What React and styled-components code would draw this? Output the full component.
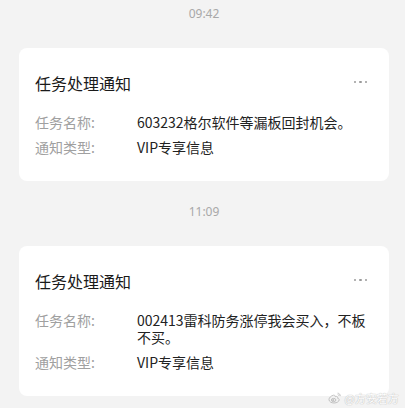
import React from "react";
import styled, { createGlobalStyle } from "styled-components";

const Global = createGlobalStyle`
  html, body { margin: 0; padding: 0; background: #f3f3f3; }
  body { font-family: "Noto Sans CJK SC", "Noto Sans", "Liberation Sans", sans-serif; }
`;

const Page = styled.div`
  position: relative;
  width: 405px;
  height: 408px;
  overflow: hidden;
  box-sizing: border-box;
  padding: 6px 16px 0 19px;
  display: flex;
  flex-direction: column;
  gap: 23px;
`;

const Group = styled.section`
  display: flex;
  flex-direction: column;
  gap: 26px;
`;

const Time = styled.div`
  text-align: center;
  font-size: 12px;
  line-height: 16px;
  color: #a8a8a8;
  font-family: "Noto Sans", "Liberation Sans", sans-serif;
`;

const Card = styled.div`
  background: #ffffff;
  border-radius: 8px;
  padding: 24px 16px 25px 16px;
  display: flex;
  flex-direction: column;
`;

const Header = styled.div`
  display: flex;
  align-items: center;
  justify-content: space-between;
  margin-bottom: 20px;
`;

const Title = styled.div`
  font-size: 16px;
  line-height: 22px;
  color: #1a1a1a;
`;

const Dots = styled.div`
  display: flex;
  gap: 3px;
  margin-right: 6px;
  margin-top: -2px;
`;

const Dot = styled.span`
  width: 2.5px;
  height: 2.5px;
  border-radius: 50%;
  background: #9a9a9a;
`;

const Rows = styled.div`
  display: flex;
  flex-direction: column;
  gap: 8px;
`;

const Row = styled.div`
  display: grid;
  grid-template-columns: 102px 1fr;
  font-size: 14px;
  line-height: 17px;
`;

const Label = styled.div`
  color: #a0a0a0;
`;

const Value = styled.div`
  color: #222222;
  word-break: break-all;
`;

const Watermark = styled.div`
  position: absolute;
  right: 6px;
  bottom: 4px;
  display: flex;
  align-items: center;
  gap: 3px;
  font-size: 11px;
  line-height: 12px;
  color: #ffffff;
  text-shadow: 0 0 1px #b8b8b8, 0 0 1px #b8b8b8;
  opacity: 0.9;
`;

const notices = [
  { time: "09:42", name: "603232格尔软件等漏板回封机会。", type: "VIP专享信息" },
  { time: "11:09", name: "002413雷科防务涨停我会买入，不板不买。", type: "VIP专享信息" },
];

function WeiboIcon() {
  return (
    <svg width="14" height="12" viewBox="0 0 14 12" fill="none" stroke="#b5b5b5" strokeWidth="0.9">
      <path d="M5.5 3.2C3 3.8 1 5.7 1 7.6c0 2 2.4 3.4 5 3.4 3 0 5.2-1.6 5.2-3.2 0-1-1-1.5-1.7-1.6.4-.9.2-1.8-1-1.8-.7 0-1.4.3-1.4.3s.4-1.8-1.6-1.5z" />
      <ellipse cx="5.6" cy="8" rx="2.3" ry="1.6" />
      <circle cx="5.2" cy="8.1" r="0.6" fill="#b5b5b5" />
      <path d="M9.6 1.2c1.6 0 2.8 1.3 2.6 2.9" />
      <path d="M9.7 2.6c.8 0 1.3.6 1.2 1.3" />
    </svg>
  );
}

export default function App() {
  return (
    <>
      <Global />
      <Page>
        {notices.map((n) => (
          <Group key={n.time}>
            <Time>{n.time}</Time>
            <Card>
              <Header>
                <Title>任务处理通知</Title>
                <Dots>
                  <Dot />
                  <Dot />
                  <Dot />
                </Dots>
              </Header>
              <Rows>
                <Row>
                  <Label>任务名称:</Label>
                  <Value>{n.name}</Value>
                </Row>
                <Row>
                  <Label>通知类型:</Label>
                  <Value>{n.type}</Value>
                </Row>
              </Rows>
            </Card>
          </Group>
        ))}
        <Watermark>
          <WeiboIcon />
          <span>@方安若方</span>
        </Watermark>
      </Page>
    </>
  );
}
